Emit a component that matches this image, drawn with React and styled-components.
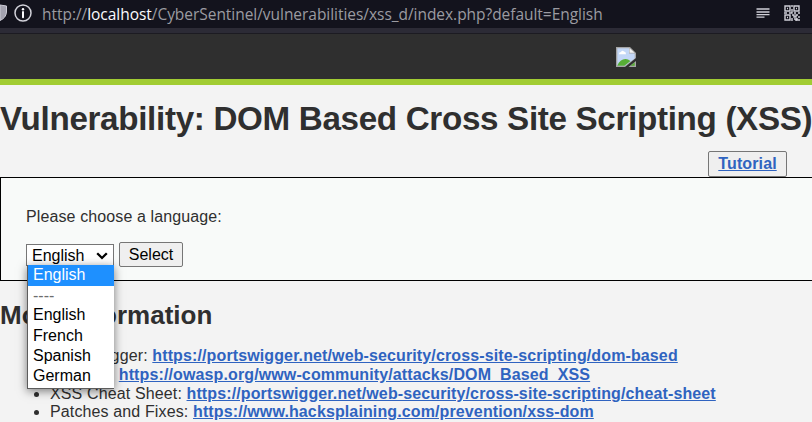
import React from "react";
import styled, { createGlobalStyle } from "styled-components";

const GlobalStyle = createGlobalStyle`
  * { box-sizing: border-box; }
  html, body { margin: 0; padding: 0; }
  body {
    width: 812px;
    height: 422px;
    overflow: hidden;
    background: #f3f3f3;
    color: #2f2f2f;
    font-family: "Liberation Sans", Arial, sans-serif;
    font-size: 16px;
  }
`;

const Page = styled.div`
  display: flex;
  flex-direction: column;
  width: 812px;
  height: 422px;
  overflow: hidden;
`;

const AddressBar = styled.div`
  display: flex;
  align-items: center;
  flex: none;
  height: 28px;
  background: #13131d;
`;

const ShieldIcon = styled.svg`
  flex: none;
  width: 8px;
  height: 28px;
`;

const InfoIcon = styled.svg`
  flex: none;
  width: 20px;
  height: 20px;
  margin-left: 5px;
  margin-top: -2px;
`;

const Url = styled.div`
  flex: 1;
  margin-left: 9px;
  font: 15.5px/26px "Open Sans", "Noto Sans", sans-serif;
  letter-spacing: -0.04px;
  color: #9b9ba1;
  white-space: pre;
`;

const Host = styled.span`
  color: #fbfbfe;
`;

const BarIcon = styled.svg`
  flex: none;
  width: 16px;
  height: 16px;
  margin: 0 12px 2px 1px;
`;

const Separator = styled.div`
  flex: none;
  height: 6px;
  background: #2c2b36;
  border-bottom: 1px solid #1c1b22;
`;

const Header = styled.header`
  flex: none;
  display: flex;
  height: 51px;
  padding: 13px 0 0 616px;
  background: #2f2f2f;
  border-bottom: 6px solid #a1cc33;
`;

const Title = styled.h1`
  flex: none;
  margin: 0;
  height: 65px;
  padding-top: 14px;
  font-size: 33.2px;
  line-height: 40px;
  letter-spacing: -0.32px;
  white-space: nowrap;
`;

const TutorialRow = styled.div`
  flex: none;
  display: flex;
  justify-content: flex-end;
  height: 27px;
  padding: 1px 25px 0 0;
`;

const Button = styled.button`
  height: ${(p) => p.$height}px;
  width: ${(p) => p.$width}px;
  padding: 0;
  border: 1px solid #767676;
  border-radius: 2px;
  background: #efefef;
  color: #000;
  font: 16px/20px "Liberation Sans", Arial, sans-serif;
`;

const Link = styled.a`
  color: #2f63c0;
  font-weight: bold;
  text-decoration: underline;
  letter-spacing: 0.12px;
`;

const Panel = styled.section`
  flex: none;
  height: 104px;
  padding: 29px 25px 0;
  background: #f8faf9;
  border: 1px solid #000;
  border-right: 0;
`;

const Prompt = styled.p`
  margin: 0;
  line-height: 20px;
  letter-spacing: 0.11px;
`;

const Form = styled.div`
  display: flex;
  align-items: flex-start;
  gap: 5px;
  margin-top: 15px;
`;

const Select = styled.div`
  position: relative;
  display: flex;
  align-items: center;
  justify-content: space-between;
  width: 88px;
  height: 22px;
  margin-top: 2px;
  padding: 2px 5px 0;
  border: 1px solid #767676;
  background: #fff;
  color: #000;
  line-height: 20px;
`;

const Chevron = styled.svg`
  width: 12px;
  height: 8px;
`;

const Options = styled.ul`
  position: absolute;
  top: 20px;
  left: 0;
  width: 87px;
  height: 124px;
  margin: 0;
  padding: 0;
  list-style: none;
  background: #fff;
  border: solid #5c5c5c;
  border-width: 0 0 1px 1px;
  box-shadow: 0 2px 9px rgba(0, 0, 0, 0.5);
`;

const Option = styled.li`
  height: 20.3px;
  padding-left: 5px;
  line-height: ${(p) => (p.$muted ? 20.6 : 18.6)}px;
  color: ${(p) => (p.$muted ? "#6d6d6d" : "#000")};
`;

const ActiveOption = styled(Option)`
  height: 21px;
  line-height: 19px;
  background: #1e90ff;
  color: #fff;
`;

const Subtitle = styled.h2`
  flex: none;
  margin: 0;
  height: 65px;
  padding-top: 19px;
  font-size: 26px;
  line-height: 30px;
`;

const Resources = styled.ul`
  margin: 0;
  padding-left: 50px;
`;

const Resource = styled.li`
  height: 18.8px;
  line-height: 19px;
  letter-spacing: 0.13px;
  white-space: nowrap;
`;

const RESOURCES = [
  ["Port Swigger", "https://portswigger.net/web-security/cross-site-scripting/dom-based"],
  ["OWASP", "https://owasp.org/www-community/attacks/DOM_Based_XSS"],
  ["XSS Cheat Sheet", "https://portswigger.net/web-security/cross-site-scripting/cheat-sheet"],
  ["Patches and Fixes", "https://www.hacksplaining.com/prevention/xss-dom"],
];

const LANGUAGES = ["English", "French", "Spanish", "German"];

function BrokenImage() {
  return (
    <svg width="20" height="20" viewBox="0 0 20 20" aria-hidden="true">
      <path d="M0 0H14L20 6V11L9 20H0Z" fill="#a5a5a5" />
      <path d="M1.3 1.3H13V6.5H18.7V11.5L9 18.7H1.3Z" fill="#c3d7f7" />
      <path d="M3 7.2Q3 5 5 5Q6 3 8 4.5Q10 4.5 10 7.2Z" fill="#fff" />
      <path d="M1.3 18.7Q4 12 9.5 12Q12 12 14.5 14L8.5 18.7Z" fill="#57ad35" />
      <path d="M13.5 1.3L18.5 5.8H13.5Z" fill="#f4f4f4" />
      <path d="M20 14V20H12.5Z" fill="#a5a5a5" />
      <path d="M18.7 15.3V18.7H14.5Z" fill="#57ad35" />
    </svg>
  );
}

export default function App() {
  return (
    <>
      <GlobalStyle />
      <Page>
        <AddressBar>
          <ShieldIcon viewBox="0 0 8 28">
            <path d="M0 5L6.5 6V12Q6 18 0 20.5Z" fill="#a3a2af" stroke="#cccbd6" />
          </ShieldIcon>
          <InfoIcon viewBox="0 0 20 20" fill="none">
            <circle cx="10" cy="10" r="8" stroke="#d2d2da" strokeWidth="1.5" />
            <path d="M10 9V14.3" stroke="#fbfbfe" strokeWidth="2" strokeLinecap="round" />
            <circle cx="10" cy="6.2" r="1.2" fill="#fbfbfe" />
          </InfoIcon>
          <Url>
            http://<Host>localhost</Host>/CyberSentinel/vulnerabilities/xss_d/index.php?default=English
          </Url>
          <BarIcon viewBox="0 0 16 16" stroke="#d0d0d8" strokeWidth="1.3">
            <path d="M1.5 4H14.5M1.5 7H14.5M1.5 9.7H14.5M1.5 12.2H9.5" />
          </BarIcon>
          <BarIcon viewBox="0 0 16 16" fill="none" stroke="#d0d0d8" strokeWidth="1.4">
            <path d="M1 1H6V6H1ZM10 1H15V6H10ZM1 10H6V15H1Z" />
            <path d="M3 3.5H4M12 3.5H13M3 12.5H4M8 0V2M8 4V8H5M0 8H3M10 8H12M14 8H16M8 10H10V12H12V10H14M15 11V13M8 13V16M10 14H12V16M13 13V15H16" />
          </BarIcon>
        </AddressBar>
        <Separator />
        <Header>
          <BrokenImage />
        </Header>
        <Title>Vulnerability: DOM Based Cross Site Scripting (XSS)</Title>
        <TutorialRow>
          <Button $width={79} $height={26}>
            <Link>Tutorial</Link>
          </Button>
        </TutorialRow>
        <Panel>
          <Prompt>Please choose a language:</Prompt>
          <Form>
            <Select>
              English
              <Chevron viewBox="0 0 12 8" fill="none">
                <path d="M1.2 1.3L6 6L10.8 1.3" stroke="#000" strokeWidth="2.3" />
              </Chevron>
              <Options>
                <ActiveOption>English</ActiveOption>
                <Option $muted>----</Option>
                {LANGUAGES.map((name) => (
                  <Option key={name}>{name}</Option>
                ))}
              </Options>
            </Select>
            <Button $width={64} $height={25}>Select</Button>
          </Form>
        </Panel>
        <Subtitle>More Information</Subtitle>
        <Resources>
          {RESOURCES.map(([label, url]) => (
            <Resource key={url}>
              {label}: <Link href={url}>{url}</Link>
            </Resource>
          ))}
        </Resources>
      </Page>
    </>
  );
}
